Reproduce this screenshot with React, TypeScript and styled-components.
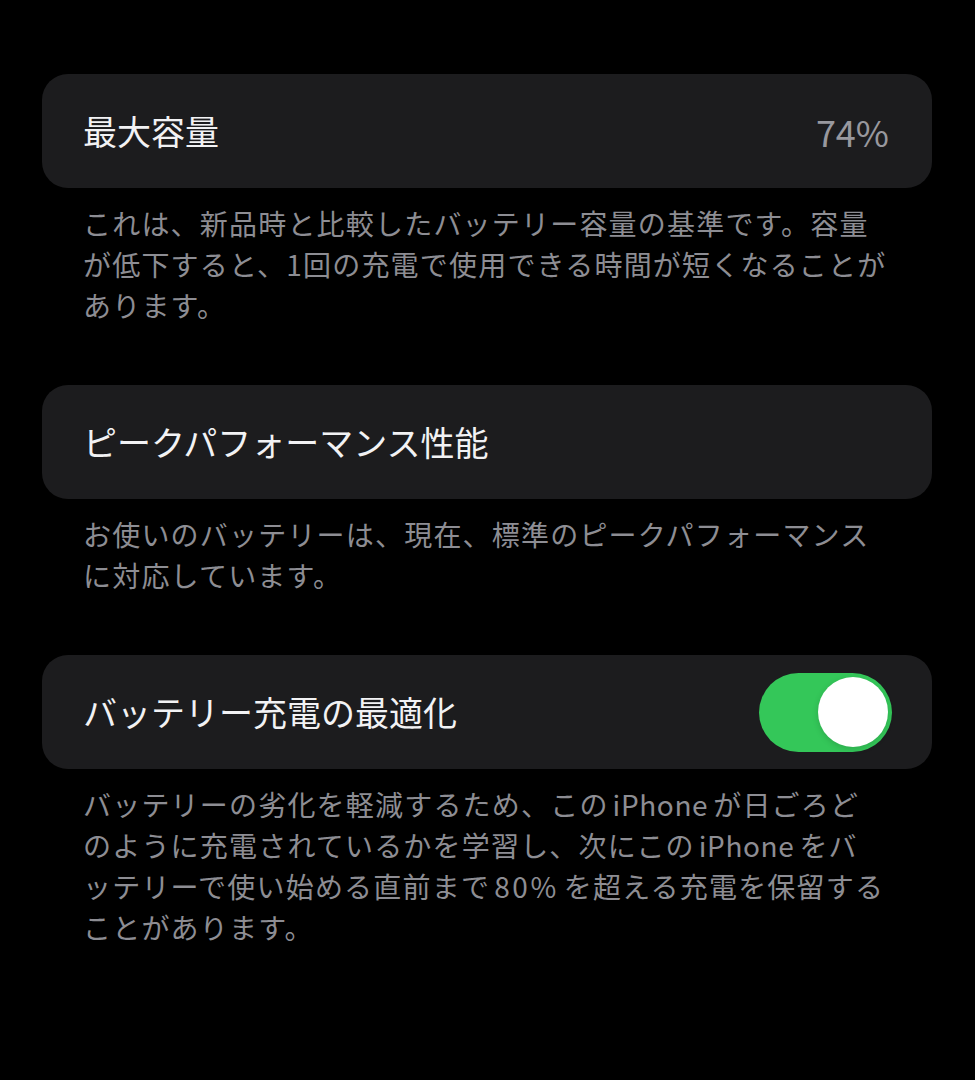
import React from 'react';
import styled, { createGlobalStyle } from 'styled-components';

const GlobalStyle = createGlobalStyle`
  html, body {
    margin: 0;
    padding: 0;
    background: #000;
  }
  body {
    font-family: "Noto Sans CJK JP", "Noto Sans", sans-serif;
    -webkit-font-smoothing: antialiased;
  }
`;

const Page = styled.div`
  width: 975px;
  min-height: 1080px;
  box-sizing: border-box;
  padding: 74px 43px 0 42px;
  display: flex;
  flex-direction: column;
  gap: 59px;
  background: #000;
`;

const Section = styled.section`
  display: flex;
  flex-direction: column;
  gap: 15px;
`;

const Card = styled.div`
  height: 114px;
  box-sizing: border-box;
  padding: 0 40px 0 41px;
  border-radius: 26px;
  background: #1c1c1e;
  display: flex;
  align-items: center;
  justify-content: space-between;
`;

const Title = styled.span`
  font-size: 34px;
  line-height: 1;
  color: #f2f2f4;
  white-space: nowrap;
`;

const Value = styled.span`
  font-size: 36px;
  line-height: 1;
  color: #98989e;
  margin-right: 3px;
`;

const Toggle = styled.div<{ $on: boolean }>`
  width: 133px;
  height: 79px;
  border-radius: 40px;
  background: ${(p) => (p.$on ? '#34c759' : '#39393d')};
  box-sizing: border-box;
  padding: 4.5px;
  display: flex;
  justify-content: ${(p) => (p.$on ? 'flex-end' : 'flex-start')};
`;

const Knob = styled.div`
  width: 70px;
  height: 70px;
  border-radius: 50%;
  background: #fff;
  box-shadow: 0 2px 6px rgba(0, 0, 0, 0.15);
`;

const Description = styled.p`
  margin: 0;
  padding-left: 41px;
  font-size: 28px;
  line-height: 41px;
  letter-spacing: 1.2px;
  color: #8d8d93;
`;

const Line = styled.span`
  display: block;
  white-space: nowrap;
`;

// iOS puts a little air between Japanese and Latin runs
const Latin = styled.span<{ $digits?: boolean }>`
  margin: 0 5px 0 4px;
  letter-spacing: ${(p) => (p.$digits ? '2.6px' : '0.6px')};
`;

const withLatin = (text: string) =>
  text.split(/(iPhone|80%)/).map((part, i) =>
    i % 2 === 1 ? (
      <Latin key={i} $digits={/\d/.test(part)}>
        {part}
      </Latin>
    ) : (
      part
    )
  );

interface RowProps {
  title: string;
  value?: string;
  toggle?: boolean;
  lines: string[];
}

const SettingRow = ({ title, value, toggle, lines }: RowProps) => (
  <Section>
    <Card>
      <Title>{title}</Title>
      {value && <Value>{value}</Value>}
      {toggle !== undefined && (
        <Toggle $on={toggle}>
          <Knob />
        </Toggle>
      )}
    </Card>
    <Description>
      {lines.map((l) => (
        <Line key={l}>{withLatin(l)}</Line>
      ))}
    </Description>
  </Section>
);

export default function App() {
  return (
    <>
      <GlobalStyle />
      <Page>
        <SettingRow
          title="最大容量"
          value="74%"
          lines={[
            'これは、新品時と比較したバッテリー容量の基準です。容量',
            'が低下すると、1回の充電で使用できる時間が短くなることが',
            'あります。',
          ]}
        />
        <SettingRow
          title="ピークパフォーマンス性能"
          lines={[
            'お使いのバッテリーは、現在、標準のピークパフォーマンス',
            'に対応しています。',
          ]}
        />
        <SettingRow
          title="バッテリー充電の最適化"
          toggle
          lines={[
            'バッテリーの劣化を軽減するため、このiPhoneが日ごろど',
            'のように充電されているかを学習し、次にこのiPhoneをバ',
            'ッテリーで使い始める直前まで80%を超える充電を保留する',
            'ことがあります。',
          ]}
        />
      </Page>
    </>
  );
}
